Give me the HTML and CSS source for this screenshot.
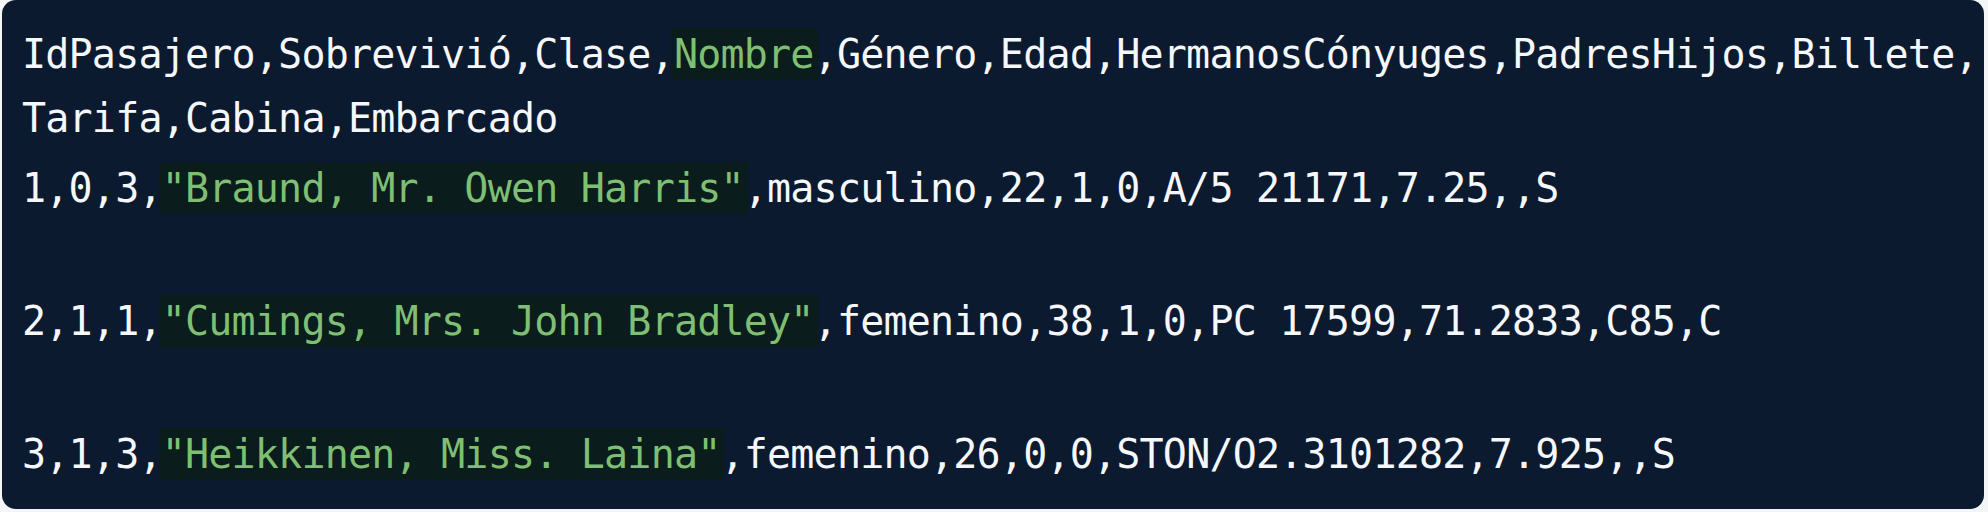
FILE: index.html
```html
<!DOCTYPE html>
<html lang="es">
<head>
<meta charset="utf-8">
<title>CSV Titanic</title>
<link rel="stylesheet" href="styles.css">
</head>
<body>
<div class="panel">
  <div class="header">
    <div class="line">IdPasajero,Sobrevivió,Clase,<span class="hl">Nombre</span>,Género,Edad,HermanosCónyuges,PadresHijos,Billete,</div>
    <div class="line">Tarifa,Cabina,Embarcado</div>
  </div>
  <div class="rows">
    <div class="line">1,0,3,<span class="hl">"Braund, Mr. Owen Harris"</span>,masculino,22,1,0,A/5 21171,7.25,,S</div>
    <div class="line blank"></div>
    <div class="line">2,1,1,<span class="hl">"Cumings, Mrs. John Bradley"</span>,femenino,38,1,0,PC 17599,71.2833,C85,C</div>
    <div class="line blank"></div>
    <div class="line">3,1,3,<span class="hl">"Heikkinen, Miss. Laina"</span>,femenino,26,0,0,STON/O2.3101282,7.925,,S</div>
  </div>
</div>
</body>
</html>
```

FILE: styles.css
```css
html, body {
  margin: 0;
  padding: 0;
  background: #f4f5f7;
}

.panel {
  box-sizing: border-box;
  margin: 0 4px 0 2px;
  height: 509px;
  background: #0b1a2f;
  border-radius: 14px;
  padding: 22px 0 0 20px;
  font-family: "DejaVu Sans Mono", "Liberation Mono", monospace;
  font-size: 40px;
  letter-spacing: -0.8px;
  color: #f5f7fa;
  overflow: hidden;
}

.line {
  white-space: pre;
}

.header .line {
  height: 64px;
  line-height: 64px;
}

.rows {
  margin-top: 5px;
}

.rows .line {
  height: 66.5px;
  line-height: 66.5px;
}

.hl {
  color: #7fbf73;
  background: #0a1c1b;
  padding: 3px 4px 3px 3px;
  margin: 0 -4px 0 -3px;
}
```
